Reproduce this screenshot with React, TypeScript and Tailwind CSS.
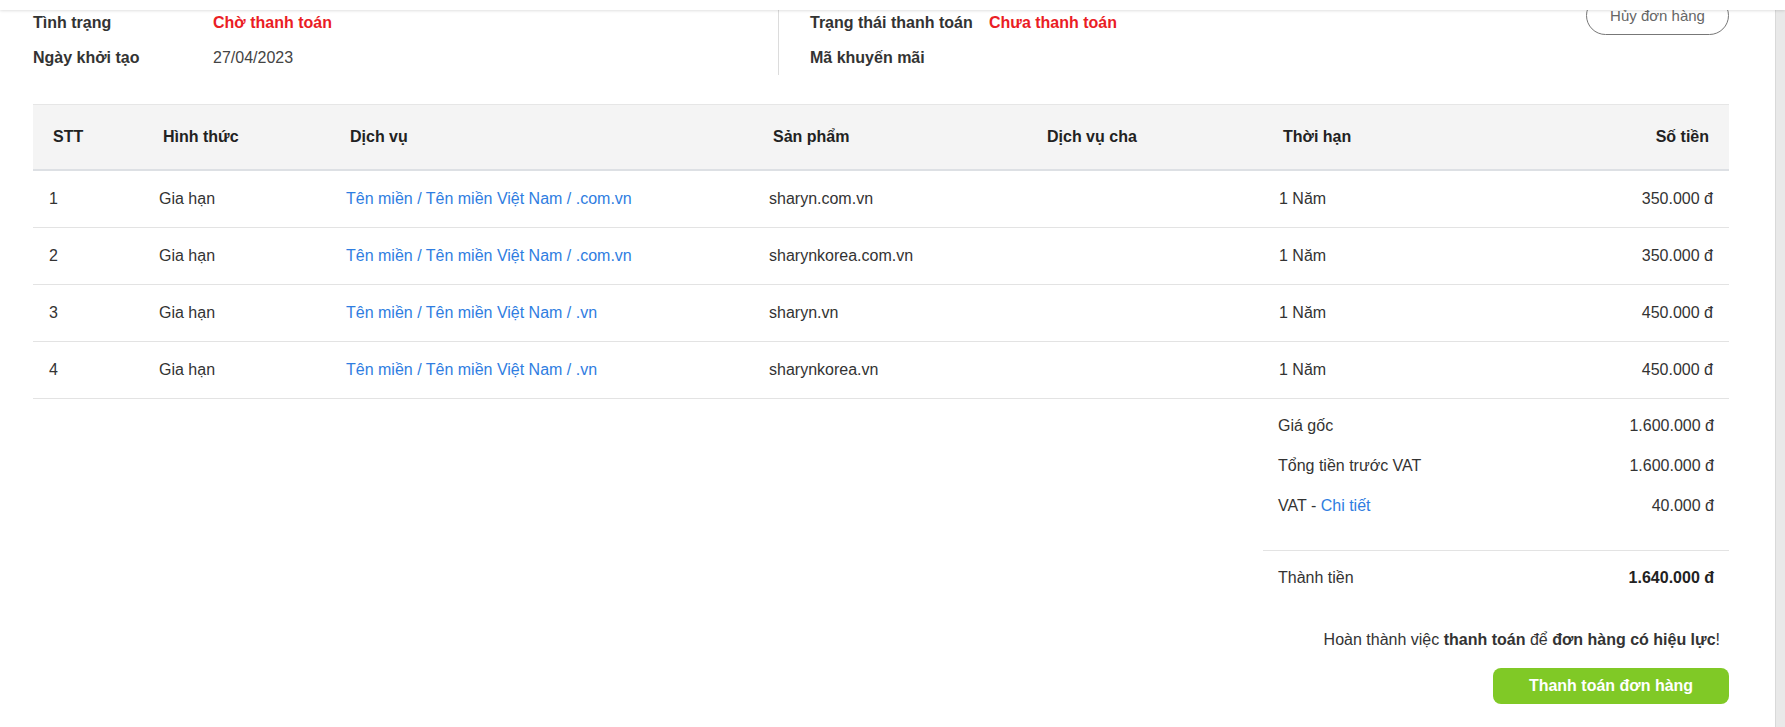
import React from 'react';

interface OrderItem {
  stt: number;
  type: string;
  service: string;
  product: string;
  parent: string;
  term: string;
  amount: string;
}

const items: OrderItem[] = [
  { stt: 1, type: 'Gia hạn', service: 'Tên miền / Tên miền Việt Nam / .com.vn', product: 'sharyn.com.vn', parent: '', term: '1 Năm', amount: '350.000 đ' },
  { stt: 2, type: 'Gia hạn', service: 'Tên miền / Tên miền Việt Nam / .com.vn', product: 'sharynkorea.com.vn', parent: '', term: '1 Năm', amount: '350.000 đ' },
  { stt: 3, type: 'Gia hạn', service: 'Tên miền / Tên miền Việt Nam / .vn', product: 'sharyn.vn', parent: '', term: '1 Năm', amount: '450.000 đ' },
  { stt: 4, type: 'Gia hạn', service: 'Tên miền / Tên miền Việt Nam / .vn', product: 'sharynkorea.vn', parent: '', term: '1 Năm', amount: '450.000 đ' },
];

const cols = 'grid grid-cols-[110px_187px_423px_274px_236px_1fr]';

export default function App() {
  return (
    <div className="min-h-screen bg-white font-['Liberation_Sans',Arial,sans-serif] text-[16px] text-[#333]">
      {/* Fixed top bar */}
      <div className="fixed top-0 left-0 right-0 z-10 h-[10px] bg-white shadow-[0_1px_3px_rgba(0,0,0,0.12)]" />

      <div className="flex min-h-screen">
        <main className="flex-1 pl-[33px] pr-[46px]">
          {/* Order info */}
          <section className="flex h-[75px] pt-[5px]">
            <div className="w-[745px]">
              <div className="flex h-[35px] items-center">
                <span className="w-[180px] font-bold text-[#333]">Tình trạng</span>
                <span className="font-bold text-[#ea1d25]">Chờ thanh toán</span>
              </div>
              <div className="flex h-[35px] items-center">
                <span className="w-[180px] font-bold text-[#333]">Ngày khởi tạo</span>
                <span className="text-[#444]">27/04/2023</span>
              </div>
            </div>
            <div className="-mt-[5px] flex flex-1 justify-between border-l border-[#dcdcdc] pl-[31px] pt-[5px]">
              <div>
                <div className="flex h-[35px] items-center">
                  <span className="w-[179px] font-bold text-[#333]">Trạng thái thanh toán</span>
                  <span className="font-bold text-[#ea1d25]">Chưa thanh toán</span>
                </div>
                <div className="flex h-[35px] items-center">
                  <span className="w-[179px] font-bold text-[#333]">Mã khuyến mãi</span>
                </div>
              </div>
              <button
                type="button"
                className="-mt-[9px] h-[39px] w-[143px] rounded-full border border-[#777] bg-white pt-[2px] text-[15px] text-[#666]"
              >
                Hủy đơn hàng
              </button>
            </div>
          </section>

          {/* Items table */}
          <div className="mt-[29px]">
            <div className={`${cols} h-[67px] items-center border-t border-b-2 border-t-[#e6e6e6] border-b-[#dde0e4] bg-[#f4f4f4] font-bold text-[#222]`}>
              <div className="px-[20px]">STT</div>
              <div className="px-[20px]">Hình thức</div>
              <div className="px-[20px]">Dịch vụ</div>
              <div className="px-[20px]">Sản phẩm</div>
              <div className="px-[20px]">Dịch vụ cha</div>
              <div className="flex justify-between px-[20px]">
                <span>Thời hạn</span>
                <span>Số tiền</span>
              </div>
            </div>
            {items.map((item) => (
              <div key={item.stt} className={`${cols} h-[57px] items-center border-b border-[#e3e3e3] text-[#333]`}>
                <div className="px-[16px]">{item.stt}</div>
                <div className="px-[16px]">{item.type}</div>
                <div className="px-[16px]">
                  <a href="#" className="text-[#2f7de1]">{item.service}</a>
                </div>
                <div className="px-[16px]">{item.product}</div>
                <div className="px-[16px]">{item.parent}</div>
                <div className="flex justify-between px-[16px]">
                  <span>{item.term}</span>
                  <span>{item.amount}</span>
                </div>
              </div>
            ))}
          </div>

          {/* Summary */}
          <div className="flex justify-end">
            <div className="w-[466px] pt-[7px]">
              <div className="flex h-[40px] items-center justify-between px-[15px]">
                <span>Giá gốc</span>
                <span>1.600.000 đ</span>
              </div>
              <div className="flex h-[40px] items-center justify-between px-[15px]">
                <span>Tổng tiền trước VAT</span>
                <span>1.600.000 đ</span>
              </div>
              <div className="flex h-[40px] items-center justify-between px-[15px]">
                <span>
                  VAT - <a href="#" className="text-[#2f7de1]">Chi tiết</a>
                </span>
                <span>40.000 đ</span>
              </div>
              <div className="mt-[24px] border-t border-[#e3e3e3]" />
              <div className="mt-[7px] flex h-[40px] items-center justify-between px-[15px]">
                <span>Thành tiền</span>
                <span className="font-bold text-[#222]">1.640.000 đ</span>
              </div>
            </div>
          </div>

          <p className="mt-[30px] pr-[9px] text-right leading-[24px] text-[#333]">
            Hoàn thành việc <b className="text-[#333]">thanh toán</b> để <b className="text-[#333]">đơn hàng có hiệu lực</b>!
          </p>
          <div className="mt-[16px] flex justify-end">
            <button
              type="button"
              className="h-[36px] w-[236px] rounded-[8px] bg-[#80c926] font-bold text-white"
            >
              Thanh toán đơn hàng
            </button>
          </div>
        </main>

        {/* Scrollbar track */}
        <div className="w-[10px] shrink-0 border-l border-[#d9d9d9] bg-[#e9e9e9]" />
      </div>
    </div>
  );
}
